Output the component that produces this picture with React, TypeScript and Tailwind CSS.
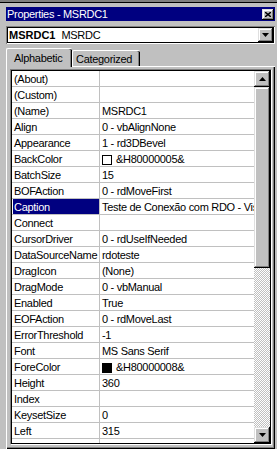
import React from 'react'

type Row = { name: string; value?: string; swatch?: string; selected?: boolean }

const rows: Row[] = [
  { name: '(About)' },
  { name: '(Custom)' },
  { name: '(Name)', value: 'MSRDC1' },
  { name: 'Align', value: '0 - vbAlignNone' },
  { name: 'Appearance', value: '1 - rd3DBevel' },
  { name: 'BackColor', value: '&H80000005&', swatch: 'bg-white' },
  { name: 'BatchSize', value: '15' },
  { name: 'BOFAction', value: '0 - rdMoveFirst' },
  { name: 'Caption', value: 'Teste de Conexão com RDO - Visual Basic', selected: true },
  { name: 'Connect' },
  { name: 'CursorDriver', value: '0 - rdUseIfNeeded' },
  { name: 'DataSourceName', value: 'rdoteste' },
  { name: 'DragIcon', value: '(None)' },
  { name: 'DragMode', value: '0 - vbManual' },
  { name: 'Enabled', value: 'True' },
  { name: 'EOFAction', value: '0 - rdMoveLast' },
  { name: 'ErrorThreshold', value: '-1' },
  { name: 'Font', value: 'MS Sans Serif' },
  { name: 'ForeColor', value: '&H80000008&', swatch: 'bg-black' },
  { name: 'Height', value: '360' },
  { name: 'Index' },
  { name: 'KeysetSize', value: '0' },
  { name: 'Left', value: '315' },
  // next row only shows its top few pixels, text hidden below the edge
  { name: '' },
]

const raised =
  'bg-[#c0c0c0] shadow-[inset_-1px_-1px_0_#000,inset_1px_1px_0_#dfdfdf,inset_-2px_-2px_0_#808080,inset_2px_2px_0_#fff]'

function Arrow({ up }: { up?: boolean }) {
  return (
    <svg width="7" height="4" viewBox="0 0 7 4">
      <path d={up ? 'M3.5 0 L7 4 L0 4 Z' : 'M0 0 L7 0 L3.5 4 Z'} fill="#000" />
    </svg>
  )
}

function GridRow({ row }: { row: Row }) {
  return (
    <div className="flex h-[16px] shrink-0 border-b border-[#c0c0c0]">
      <div className="w-[88px] shrink-0 border-r border-[#c0c0c0] pl-px">
        <div
          className={`h-full overflow-hidden whitespace-nowrap pl-px pt-px leading-[14px] ${
            row.selected ? 'bg-[#000080] text-white' : 'text-black'
          }`}
        >
          {row.name}
        </div>
      </div>
      <div className="flex min-w-0 flex-1 items-start overflow-hidden whitespace-nowrap pl-[2px] pt-px leading-[14px]">
        {row.swatch && (
          <span className={`mr-[4px] mt-[3px] h-[10px] w-[10px] shrink-0 border border-black ${row.swatch}`} />
        )}
        <span>{row.value}</span>
      </div>
    </div>
  )
}

export default function App() {
  return (
    <div className="h-[449px] w-[277px] overflow-hidden bg-[#c0c0c0] font-['Liberation_Sans',Arial,sans-serif] text-[11px] tracking-[-0.3px] text-black">
      {/* window above, mostly hidden */}
      <div className="h-[2px] bg-[#808080]" />
      <div className="h-px bg-black" />

      <div className="pl-[6px] pr-[2px] pt-[4px]">
        {/* Title bar */}
        <div className="flex h-[14px] items-center justify-between bg-[#000080] pl-[1px] pr-[1px]">
          <span className="leading-[14px] text-white">Properties - MSRDC1</span>
          <div className={`flex h-[11px] w-[12px] items-center justify-center ${raised}`}>
            <svg width="6" height="5" viewBox="0 0 6 5">
              <path d="M0 0 L6 5 M6 0 L0 5" stroke="#000" strokeWidth="1.4" />
            </svg>
          </div>
        </div>

        {/* Object combo */}
        <div className="mt-[5px] flex h-[18px] items-center bg-white pl-[3px] pr-[2px] shadow-[inset_1px_1px_0_#808080,inset_-1px_-1px_0_#fff,inset_2px_2px_0_#000,inset_-2px_-2px_0_#000]">
          <span className="font-bold tracking-normal">MSRDC1</span>
          <span className="ml-[6px]">MSRDC</span>
          <div className={`ml-auto flex h-[14px] w-[15px] items-center justify-center ${raised}`}>
            <Arrow />
          </div>
        </div>

        {/* Tabs */}
        <div className="mt-[4px] flex h-[18px] items-end">
          <div className="relative z-10 -mb-px h-[19px] w-[66px] rounded-tl-[2px] rounded-tr-[2px] border-l border-t border-white bg-[#c0c0c0] pl-[7px] pt-[2px] leading-[14px] shadow-[inset_-1px_0_0_#000,inset_-2px_0_0_#808080]">
            Alphabetic
          </div>
          <div className="h-[16px] w-[68px] rounded-tl-[2px] rounded-tr-[2px] border-l border-t border-white bg-[#c0c0c0] pl-[3px] pt-[1px] leading-[14px] shadow-[inset_-1px_0_0_#000,inset_-2px_0_0_#808080]">
            Categorized
          </div>
        </div>

        {/* Tab panel */}
        <div className="h-[383px] w-[269px] border-l border-t border-white pb-[2px] pl-[3px] pr-[1px] pt-[2px] shadow-[inset_-1px_-1px_0_#000,inset_-2px_-2px_0_#808080]">
          <div className="h-[376px] w-[262px] border border-b-white border-l-[#808080] border-r-white border-t-[#808080]">
            <div className="flex h-full border border-black bg-white">
              <div className="flex min-w-0 flex-1 flex-col overflow-hidden">
                {rows.map((r, i) => (
                  <GridRow key={i} row={r} />
                ))}
              </div>

              {/* Scrollbar */}
              <div className="flex w-[16px] shrink-0 flex-col">
                <div className={`flex h-[16px] shrink-0 items-center justify-center ${raised}`}>
                  <Arrow up />
                </div>
                <div className={`h-[181px] shrink-0 ${raised}`} />
                <div className="flex-1 bg-[repeating-conic-gradient(#c0c0c0_0_25%,#ffffff_0_50%)] bg-[length:2px_2px]" />
                <div className={`flex h-[16px] shrink-0 items-center justify-center ${raised}`}>
                  <Arrow />
                </div>
              </div>
            </div>
          </div>
        </div>
      </div>
    </div>
  )
}
